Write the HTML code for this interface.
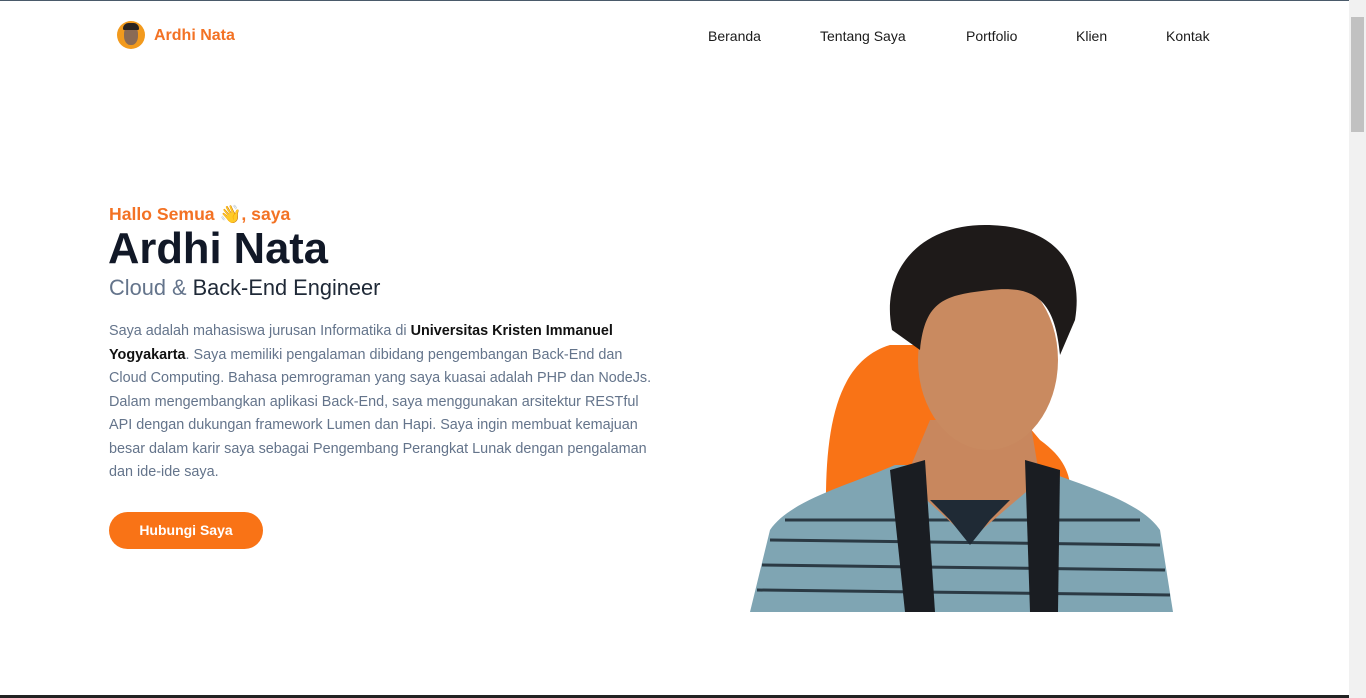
<!DOCTYPE html>
<html><head><meta charset="utf-8"><style>
*{margin:0;padding:0;box-sizing:border-box}
html,body{width:1366px;height:698px;overflow:hidden;background:#fff;font-family:"Liberation Sans",Arial,sans-serif}
.top{position:absolute;left:0;top:0;width:1349px;height:1px;background:#4a5a6a}
.bot{position:absolute;left:0;top:695px;width:1349px;height:3px;background:#222}
.sb{position:absolute;left:1349px;top:0;width:17px;height:698px;background:#f1f1f1}
.sb .th{position:absolute;left:2px;top:17px;width:13px;height:115px;background:#c1c1c1}
.logo{position:absolute;left:117px;top:21px;width:28px;height:28px;border-radius:50%;background:#f29a1d;overflow:hidden}
.logo i{position:absolute;left:7px;top:4px;width:14px;height:20px;border-radius:45%;background:#8a6a55}
.logo b{position:absolute;left:6px;top:2px;width:16px;height:7px;border-radius:8px 8px 2px 2px;background:#2a2320}
.brand{position:absolute;left:154px;top:27px;font-size:16px;font-weight:bold;color:#f37224}
.nav a{position:absolute;top:28px;font-size:14px;color:#1a1a1a;text-decoration:none}
.hi{position:absolute;left:109px;top:204px;font-size:17.6px;font-weight:bold;color:#f37224}
h1{position:absolute;left:108px;top:225px;font-size:43.5px;font-weight:bold;color:#111827}
.sub{position:absolute;left:109px;top:275px;font-size:21.8px;color:#1f2937}
.sub span{color:#64748b}
p{position:absolute;left:109px;top:320px;width:552px;font-size:14.4px;line-height:23.5px;color:#64748b}
p b{color:#111}
.btn{position:absolute;left:109px;top:512px;width:154px;height:37px;border-radius:19px;background:#f97316;color:#fff;font-weight:bold;font-size:14px;text-align:center;line-height:37px}
svg{position:absolute;left:740px;top:210px}
</style></head><body>
<div class="top"></div>
<div class="logo"><i></i><b></b></div>
<div class="brand">Ardhi Nata</div>
<div class="nav"><a style="left:708px">Beranda</a><a style="left:820px">Tentang Saya</a><a style="left:966px">Portfolio</a><a style="left:1076px">Klien</a><a style="left:1166px">Kontak</a></div>
<div class="hi">Hallo Semua 👋, saya</div>
<h1>Ardhi Nata</h1>
<div class="sub"><span>Cloud &amp;</span> Back-End Engineer</div>
<p>Saya adalah mahasiswa jurusan Informatika di <b>Universitas Kristen Immanuel Yogyakarta</b>. Saya memiliki pengalaman dibidang pengembangan Back-End dan Cloud Computing. Bahasa pemrograman yang saya kuasai adalah PHP dan NodeJs. Dalam mengembangkan aplikasi Back-End, saya menggunakan arsitektur RESTful API dengan dukungan framework Lumen dan Hapi. Saya ingin membuat kemajuan besar dalam karir saya sebagai Pengembang Perangkat Lunak dengan pengalaman dan ide-ide saya.</p>
<div class="btn">Hubungi Saya</div>
<svg width="440" height="403" viewBox="740 210 440 403">
<path d="M826 500 C826 420 840 360 890 345 L960 345 L1040 440 C1068 460 1072 480 1070 500 Z" fill="#f97316"/>
<path d="M750 612 L770 530 C790 500 850 485 895 465 L1030 465 C1080 485 1140 500 1160 530 L1173 612 Z" fill="#7fa5b3"/>
<g stroke="#2b3a44" stroke-width="3" fill="none">
<path d="M770 540 L1160 545"/><path d="M762 565 L1165 570"/><path d="M757 590 L1170 595"/><path d="M785 520 L1140 520"/>
</g>
<path d="M930 420 L1030 420 L1040 480 L970 540 L905 480 Z" fill="#c8875e"/>
<path d="M950 520 L970 545 L990 520 L1010 500 L930 500 Z" fill="#1f2a35"/>
<ellipse cx="988" cy="360" rx="70" ry="90" fill="#c98a60"/>
<path d="M892 330 C880 270 920 225 985 225 C1050 225 1085 260 1075 320 L1060 355 C1055 300 1035 285 990 290 C945 295 925 300 920 350 Z" fill="#1e1a19"/>
<path d="M890 470 L925 460 L935 612 L905 612 Z" fill="#1a1d22"/>
<path d="M1025 460 L1060 470 L1058 612 L1030 612 Z" fill="#1a1d22"/>
</svg>
<div class="sb"><div class="th"></div></div>
<div class="bot"></div>
</body></html>
